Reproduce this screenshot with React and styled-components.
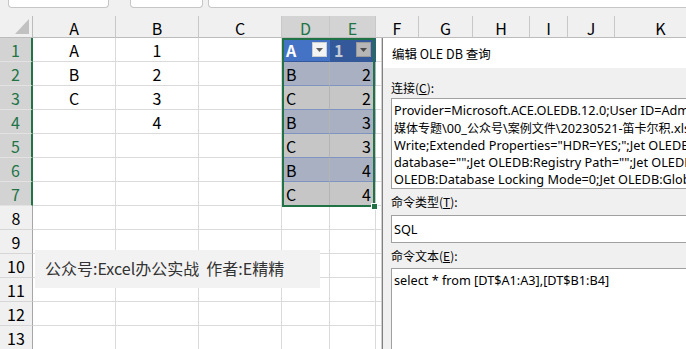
import React from 'react';
import styled, { createGlobalStyle } from 'styled-components';

const CELL_FONT = `"Noto Sans CJK SC", "Noto Sans", sans-serif`;
const UI_FONT = `"Noto Sans", "Noto Sans CJK SC", sans-serif`;
const GREEN = '#217346';

const GlobalStyle = createGlobalStyle`
  html, body { margin: 0; padding: 0; background: #fff; overflow: hidden; }
  #root { width: 686px; height: 349px; }
`;

const Page = styled.div`
  position: relative;
  width: 686px;
  height: 349px;
  overflow: hidden;
  background: #fff;
  font-family: ${CELL_FONT};
`;

const TopBar = styled.div`
  height: 16px;
  background: #f0f0f0;
  display: flex;
  align-items: flex-start;
  padding-left: 8px;
  box-sizing: border-box;
`;

const BarBox = styled.div`
  height: 8px;
  width: ${(p) => (p.$w ? `${p.$w}px` : 'auto')};
  flex: ${(p) => (p.$w ? 'none' : '1')};
  margin-left: ${(p) => p.$ml || 0}px;
  margin-right: ${(p) => p.$mr || 0}px;
  background: #fff;
  border: 1px solid #c6c6c6;
  border-top: none;
  border-radius: 0 0 4px 4px;
  box-sizing: border-box;
`;

const Sheet = styled.div`
  display: grid;
  grid-template-columns: 33px 83px 83px 83px 48px 46px 43px 54px 57px 38px 47px 92px;
  grid-template-rows: 22px repeat(13, 24px);
  width: max-content;
`;

const Corner = styled.div`
  background: #f0f0f0;
  border-right: 1px solid #bcbcbc;
  border-bottom: 1px solid #bcbcbc;
  box-sizing: border-box;
  display: flex;
  align-items: flex-end;
  justify-content: flex-end;
  padding: 0 3px 3px 0;
`;

const ColHeader = styled.div`
  background: ${(p) => (p.$sel ? '#d3d3d3' : '#f0f0f0')};
  color: ${(p) => (p.$sel ? GREEN : '#000')};
  border-right: 1px solid #c8c8c8;
  border-bottom: 1px solid #bcbcbc;
  box-sizing: border-box;
  display: flex;
  align-items: center;
  justify-content: center;
  font-size: 16px;
  padding-top: 2px;
`;

const RowHeader = styled.div`
  background: ${(p) => (p.$sel ? '#d3d3d3' : '#f0f0f0')};
  color: ${(p) => (p.$sel ? GREEN : '#000')};
  border-right: ${(p) => (p.$sel ? `2px solid ${GREEN}` : '1px solid #a6a6a6')};
  border-bottom: 1px solid ${(p) => (p.$sel ? '#e2e2e2' : '#d6d6d6')};
  box-sizing: border-box;
  display: flex;
  align-items: center;
  justify-content: center;
  font-size: 16px;
`;

const Cell = styled.div`
  border-right: 1px solid #dadada;
  border-bottom: 1px solid #dadada;
  box-sizing: border-box;
  display: flex;
  align-items: center;
  justify-content: center;
  font-size: 16px;
  color: #000;
`;

const tableBg = {
  headActive: '#4472c4',
  head: '#34599b',
  band: '#a8b0c1',
  plain: '#c6c6c6',
};

const TableCell = styled.div`
  background: ${(p) => tableBg[p.$kind]};
  color: ${(p) => (p.$kind === 'headActive' ? '#fff' : p.$kind === 'head' ? '#c4cad6' : '#000')};
  font-weight: ${(p) => (p.$kind === 'headActive' || p.$kind === 'head' ? 700 : 400)};
  border-bottom: 1px solid ${(p) => (p.$kind === 'headActive' || p.$kind === 'head' ? '#34599b' : '#7f94bf')};
  border-right: 1px solid ${(p) => (p.$first ? '#b4b4b4' : 'transparent')};
  box-sizing: border-box;
  display: flex;
  align-items: center;
  justify-content: ${(p) => (p.$right ? 'flex-end' : 'flex-start')};
  padding: ${(p) => (p.$right ? '0 4px 0 0' : '0 0 0 4px')};
  font-size: 16px;
`;

const HeadLabel = styled.span`
  flex: none;
`;

const DropBtn = styled.span`
  width: 15px;
  height: 15px;
  box-sizing: border-box;
  margin-left: auto;
  margin-right: ${(p) => p.$mr}px;
  background: ${(p) => (p.$dim ? '#b6b6b6' : '#f4f4f4')};
  border: 1px solid ${(p) => (p.$dim ? '#9a9a9a' : '#cfcfcf')};
  display: flex;
  align-items: center;
  justify-content: center;
`;

const Selection = styled.div`
  position: absolute;
  left: 282px;
  top: 38px;
  width: 93px;
  height: 169px;
  border: 2px solid ${GREEN};
  box-sizing: border-box;
  pointer-events: none;
`;

const FillHandle = styled.div`
  position: absolute;
  right: -5px;
  bottom: -5px;
  width: 7px;
  height: 7px;
  background: ${GREEN};
  border: 1px solid #fff;
  box-sizing: border-box;
`;

const FloatLabel = styled.div`
  position: absolute;
  left: 35px;
  top: 250px;
  width: 285px;
  height: 38px;
  background: #f2f2f2;
  box-sizing: border-box;
  display: flex;
  align-items: center;
  padding: 0 0 3px 10px;
  font-size: 16px;
  color: #333;
  white-space: nowrap;
`;

const Dialog = styled.div`
  position: absolute;
  left: 382px;
  top: 38px;
  width: 330px;
  bottom: 0;
  background: #f0f0f0;
  border-left: 1px solid #808080;
  box-shadow: -1px 0 0 #cfcfcf;
  display: flex;
  flex-direction: column;
  font-family: ${UI_FONT};
  color: #000;
`;

const DialogTitle = styled.div`
  height: 30px;
  flex: none;
  background: #fff;
  display: flex;
  align-items: center;
  padding-left: 9px;
  font-size: 12.5px;
  font-family: ${CELL_FONT};
`;

const DialogBody = styled.div`
  flex: 1;
  display: flex;
  flex-direction: column;
  padding: 12px 0 0 8px;
`;

const FieldLabel = styled.div`
  height: 16px;
  line-height: 16px;
  font-size: 12px;
  margin-top: ${(p) => p.$mt || 0}px;
  font-family: ${CELL_FONT};
`;

const Key = styled.span`
  text-decoration: underline;
`;

const TextBox = styled.div`
  margin-top: ${(p) => p.$mt || 0}px;
  height: ${(p) => (p.$h ? `${p.$h}px` : 'auto')};
  flex: ${(p) => (p.$grow ? '1' : 'none')};
  background: #fff;
  border: 1px solid #a0a0a0;
  border-right: none;
  border-bottom: ${(p) => (p.$grow ? 'none' : '1px solid #a0a0a0')};
  box-sizing: border-box;
  padding: ${(p) => (p.$center ? '0 0 0 2px' : '3px 0 0 2px')};
  display: flex;
  flex-direction: column;
  justify-content: ${(p) => (p.$center ? 'center' : 'flex-start')};
  overflow: hidden;
`;

const TextLine = styled.div`
  font-size: 12.7px;
  line-height: 17px;
  white-space: nowrap;
  overflow: hidden;
`;

const Cjk = styled.span`
  font-family: "Noto Sans CJK SC", sans-serif;
  font-size: 12px;
`;

function MixedText({ text }) {
  const parts = text.split(/([\u3000-\u9fff]+)/);
  return parts.map((part, i) =>
    /[\u3000-\u9fff]/.test(part) ? <Cjk key={i}>{part}</Cjk> : <React.Fragment key={i}>{part}</React.Fragment>
  );
}

const Triangle = ({ color = '#555' }) => (
  <svg width="7" height="4" viewBox="0 0 7 4">
    <path d="M0 0 L7 0 L3.5 4 Z" fill={color} />
  </svg>
);

const CornerMark = () => (
  <svg width="14" height="15" viewBox="0 0 14 15">
    <path d="M14 0 L14 15 L0 15 Z" fill="#c1c1c1" />
  </svg>
);

const LETTERS = ['A', 'B', 'C', 'D', 'E', 'F', 'G', 'H', 'I', 'J', 'K'];
const COL_A = { 1: 'A', 2: 'B', 3: 'C' };
const COL_B = { 1: '1', 2: '2', 3: '3', 4: '4' };
const TABLE_D = ['A', 'B', 'C', 'B', 'C', 'B', 'C'];
const TABLE_E = ['1', '2', '2', '3', '3', '4', '4'];

const CONNECTION = [
  'Provider=Microsoft.ACE.OLEDB.12.0;User ID=Admin;Data Source=D:\\',
  '媒体专题\\00_公众号\\案例文件\\20230521-笛卡尔积.xlsx;Mode=Share Deny',
  'Write;Extended Properties="HDR=YES;";Jet OLEDB:System',
  'database="";Jet OLEDB:Registry Path="";Jet OLEDB:Engine Type=37',
  'OLEDB:Database Locking Mode=0;Jet OLEDB:Global Partial Bulk Ops=2',
];

function renderRow(r) {
  const cells = [
    <RowHeader key={`h${r}`} $sel={r <= 7}>
      {r}
    </RowHeader>,
  ];
  LETTERS.forEach((L) => {
    const key = `${L}${r}`;
    if ((L === 'D' || L === 'E') && r <= 7) {
      const isD = L === 'D';
      const value = isD ? TABLE_D[r - 1] : TABLE_E[r - 1];
      if (r === 1) {
        cells.push(
          <TableCell key={key} $kind={isD ? 'headActive' : 'head'} $first={false}>
            <HeadLabel>{value}</HeadLabel>
            <DropBtn $dim={!isD} $mr={isD ? 2 : 4}>
              <Triangle color={isD ? '#5f5f5f' : '#4a4a4a'} />
            </DropBtn>
          </TableCell>
        );
      } else {
        cells.push(
          <TableCell key={key} $kind={r % 2 === 0 ? 'band' : 'plain'} $first={isD} $right={!isD}>
            {value}
          </TableCell>
        );
      }
      return;
    }
    let v = '';
    if (L === 'A') v = COL_A[r] || '';
    if (L === 'B') v = COL_B[r] || '';
    cells.push(<Cell key={key}>{v}</Cell>);
  });
  return cells;
}

export default function App() {
  const rows = [];
  for (let r = 1; r <= 13; r += 1) rows.push(...renderRow(r));
  return (
    <Page>
      <GlobalStyle />
      <TopBar>
        <BarBox $w={101} />
        <BarBox $w={73} $ml={21} />
        <BarBox $ml={5} $mr={-10} />
      </TopBar>
      <Sheet>
        <Corner>
          <CornerMark />
        </Corner>
        {LETTERS.map((L) => (
          <ColHeader key={L} $sel={L === 'D' || L === 'E'}>
            {L}
          </ColHeader>
        ))}
        {rows}
      </Sheet>
      <Selection>
        <FillHandle />
      </Selection>
      <FloatLabel>公众号:Excel办公实战&nbsp;&nbsp;作者:E精精</FloatLabel>
      <Dialog>
        <DialogTitle>编辑 OLE DB 查询</DialogTitle>
        <DialogBody>
          <FieldLabel>
            连接(<Key>C</Key>):
          </FieldLabel>
          <TextBox $mt={2} $h={91}>
            {CONNECTION.map((line) => (
              <TextLine key={line}>
                <MixedText text={line} />
              </TextLine>
            ))}
          </TextBox>
          <FieldLabel $mt={5}>
            命令类型(<Key>T</Key>):
          </FieldLabel>
          <TextBox $mt={5} $h={28} $center>
            <TextLine>SQL</TextLine>
          </TextBox>
          <FieldLabel $mt={5}>
            命令文本(<Key>E</Key>):
          </FieldLabel>
          <TextBox $mt={4} $grow>
            <TextLine>select * from [DT$A1:A3],[DT$B1:B4]</TextLine>
          </TextBox>
        </DialogBody>
      </Dialog>
    </Page>
  );
}
